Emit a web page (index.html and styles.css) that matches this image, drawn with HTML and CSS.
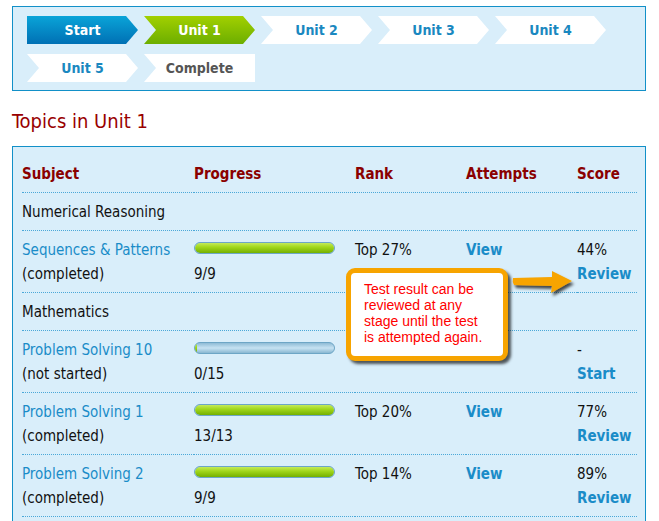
FILE: index.html
```html
<!DOCTYPE html>
<html lang="en">
<head>
  <meta charset="UTF-8">
  <title>Topics in Unit 1</title>
  <link rel="stylesheet" href="styles.css">
</head>
<body>

<div class="steps">
  <a class="step first done">Start</a>
  <a class="step current">Unit 1</a>
  <a class="step">Unit 2</a>
  <a class="step">Unit 3</a>
  <a class="step">Unit 4</a>
  <a class="step">Unit 5</a>
  <a class="step last">Complete</a>
</div>

<h2 class="title">Topics in Unit 1</h2>

<div class="topics">
  <table>
    <tr>
      <th class="c-subject">Subject</th>
      <th class="c-progress">Progress</th>
      <th class="c-rank">Rank</th>
      <th class="c-attempts">Attempts</th>
      <th class="c-score">Score</th>
    </tr>
    <tr>
      <td colspan="5">Numerical Reasoning</td>
    </tr>
    <tr>
      <td><a class="topic">Sequences &amp; Patterns</a><br>(completed)</td>
      <td><div class="bar"><span class="fill" style="width: 100%"></span></div>9/9</td>
      <td>Top 27%</td>
      <td><a class="act">View</a></td>
      <td>44%<br><a class="act">Review</a></td>
    </tr>
    <tr>
      <td colspan="5">Mathematics</td>
    </tr>
    <tr>
      <td><a class="topic">Problem Solving 10</a><br>(not started)</td>
      <td><div class="bar"><span class="fill" style="width: 2px"></span></div>0/15</td>
      <td></td>
      <td></td>
      <td>-<br><a class="act">Start</a></td>
    </tr>
    <tr>
      <td><a class="topic">Problem Solving 1</a><br>(completed)</td>
      <td><div class="bar"><span class="fill" style="width: 100%"></span></div>13/13</td>
      <td>Top 20%</td>
      <td><a class="act">View</a></td>
      <td>77%<br><a class="act">Review</a></td>
    </tr>
    <tr>
      <td><a class="topic">Problem Solving 2</a><br>(completed)</td>
      <td><div class="bar"><span class="fill" style="width: 100%"></span></div>9/9</td>
      <td>Top 14%</td>
      <td><a class="act">View</a></td>
      <td>89%<br><a class="act">Review</a></td>
    </tr>
  </table>

  <!-- callout -->
  <div class="callout">Test result can be reviewed at any stage until the test is attempted again.</div>
  <svg class="arrow" width="70" height="34" viewBox="0 0 70 34">
    <defs>
      <filter id="sh" x="-20%" y="-30%" width="150%" height="180%">
        <feDropShadow dx="2" dy="3" stdDeviation="1.5" flood-color="#000" flood-opacity="0.7"/>
      </filter>
    </defs>
    <path d="M5 13 Q4 17 6 20 L44 21 L43 28 L64 16 L44 6 L44 12 Z" fill="#f7a400" filter="url(#sh)"/>
  </svg>
</div>

</body>
</html>
```

FILE: styles.css
```css
body {
  font-family: "DejaVu Sans Condensed", "DejaVu Sans", sans-serif;
  font-size: 15px;
  color: #111;
  background: #fff;
  margin: 0;
  padding: 6px 13px 0 12px;
}
a {
  text-decoration: none;
}

/* Step bar */
.steps {
  display: flex;
  flex-wrap: wrap;
  gap: 10px 6px;
  background: #d9eefa;
  border: 1px solid #1290c8;
  padding: 9px 14px 8px 14px;
}
.step {
  width: 111px;
  height: 28px;
  line-height: 28px;
  text-align: center;
  font-size: 14px;
  font-weight: bold;
  color: #1a88c0;
  background: #fff;
  clip-path: polygon(0 0, calc(100% - 12px) 0, 100% 50%, calc(100% - 12px) 100%, 0 100%, 12px 50%);
}
.step.first {
  clip-path: polygon(0 0, calc(100% - 12px) 0, 100% 50%, calc(100% - 12px) 100%, 0 100%);
}
.step.last {
  color: #555;
  clip-path: polygon(0 0, 100% 0, 100% 100%, 0 100%, 12px 50%);
}
.step.done {
  color: #fff;
  background: linear-gradient(#0aa4d8, #0070b4);
}
.step.current {
  color: #fff;
  background: linear-gradient(#a2d000, #6cae00);
}

.title {
  font-size: 20px;
  font-weight: normal;
  color: #990000;
  margin: 18px 0 13px 0;
  line-height: 24px;
}

/* Topics table */
.topics {
  position: relative;
  background: #d9eefa;
  border: 1px solid #1290c8;
  border-bottom: none;
  padding: 8px 8px 10px 9px;
}
table {
  width: 100%;
  border-collapse: collapse;
}
th, td {
  text-align: left;
  vertical-align: top;
  line-height: 24px;
  padding: 7px 0 6px 0;
  border-bottom: 1px dotted #4aa8d8;
}
th {
  color: #8a0000;
  font-weight: bold;
}
.c-subject { width: 172px; }
.c-progress { width: 161px; }
.c-rank { width: 111px; }
.c-attempts { width: 111px; }

.topic {
  color: #1a8cc8;
}
.act {
  color: #1a8cc8;
  font-weight: bold;
}

.bar {
  width: 139px;
  height: 10px;
  margin: 4px 0 8px 0;
  border: 1px solid #6da6c6;
  border-radius: 6px;
  background: linear-gradient(#8fbcd6, #c6e2f2 50%, #8ab8d2);
  overflow: hidden;
}
.fill {
  display: block;
  height: 100%;
  width: 100%;
  border-radius: 6px 5px 5px 6px;
  background: linear-gradient(#c4ea5a, #a2d81c 40%, #74b000);
}

.callout {
  position: absolute;
  left: 333px;
  top: 121px;
  width: 125px;
  padding: 8px 14px 11px 13px;
  background: #fff;
  border: 5px solid #f7a400;
  border-radius: 9px;
  box-shadow: 3px 3px 3px rgba(0, 0, 0, 0.65);
  font-family: "Liberation Sans", Arial, sans-serif;
  font-size: 14px;
  line-height: 16px;
  color: #f00;
}
.arrow {
  position: absolute;
  left: 495px;
  top: 118px;
}
```
